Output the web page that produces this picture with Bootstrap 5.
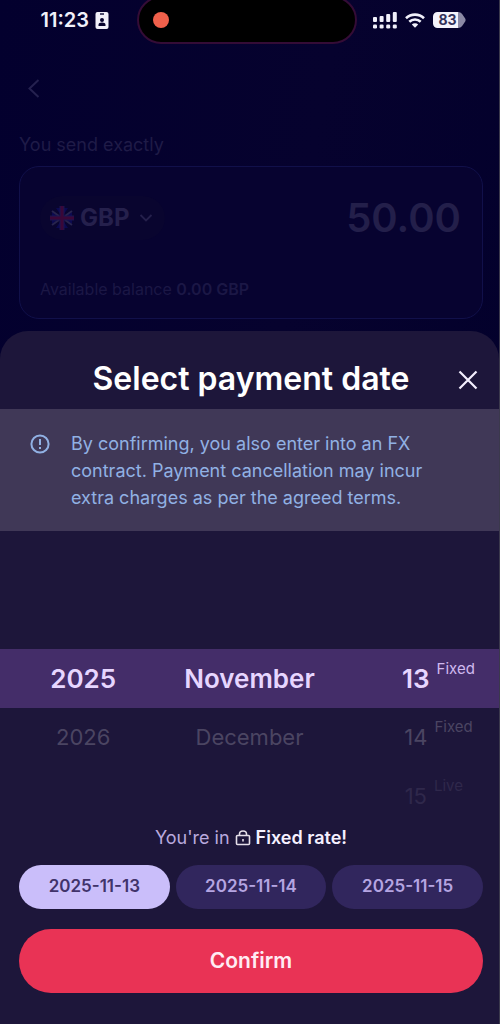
<!DOCTYPE html>
<html lang="en">
<head>
<meta charset="utf-8">
<meta name="viewport" content="width=device-width, initial-scale=1">
<title>Select payment date</title>
<link href="https://cdn.jsdelivr.net/npm/bootstrap@5.3.0/dist/css/bootstrap.min.css" rel="stylesheet">
<style>
  body { font-family: Inter, "Open Sans", sans-serif; background: #02002b; color: #fff; }
  .screen { background: linear-gradient(100deg, #03002e, #06022e 50%, #02002b); border-right: 1px solid #3b394c; }
  .screen button { font-family: inherit; }
  .status-bar { display: grid; grid-template-columns: 1fr 220px 1fr; height: 44px; padding-right: 5px; overflow: hidden; }
  .clock { font-size: 20px; line-height: 24px; color: #f1f0fa; }
  .status-time { padding-right: 28px; gap: 6px; }
  .island { height: 48px; margin-top: -4px; background: #000; border: 2px solid #340c36; border-radius: 24px; }
  .rec-dot { width: 16px; height: 16px; background: #f0604b; margin-left: 14px; }
  .plain-btn { background: none; border: 0; padding: 0; color: inherit; }
  .back-btn { color: #25214f; }
  .send-area { padding: 0 16px 12px 19px; }
  .send-label { font-size: 18px; line-height: 26px; color: #1f1b47; }
  .amount-card { border: 1px solid #11104a; border-radius: 20px; background: #070330; height: 153px; padding: 29px 21px 19px 20px; }
  .currency-btn { background: #09052f; border: 0; border-radius: 22px; height: 44px; padding: 0 12px 0 10px; color: #25204c; font-size: 24px; gap: 6px; }
  .amount-input { background: none; border: 0; padding: 0; color: #231f4a; font-size: 40px; line-height: 44px; min-width: 0; }
  .balance { font-size: 16px; line-height: 20px; color: #1b1745; }
  .sheet { background: #1d163a; border-radius: 28px 28px 0 0; }
  .sheet-head { display: grid; grid-template-columns: 32px 1fr 32px; height: 78px; padding: 28px 15px 0 18px; }
  .sheet-title { font-size: 32px; line-height: 40px; }
  .notice { background: #403857; color: #91b1e4; padding: 21px 50px 20px 30px; gap: 21px; }
  .notice p { font-size: 18px; line-height: 27px; }
  .picker { display: grid; grid-template-columns: repeat(3, 1fr); padding: 118px 0 0; height: 295px; }
  .opt { display: block; width: 100%; height: 59px; border: 0; background: none; padding: 0; font-size: 22px; color: #4b4562; }
  .opt.chosen { background: #442d69; color: #e7d6ff; font-size: 26px; font-weight: 600; }
  .opt.faint { color: #2f284b; }
  .rate-tag { position: absolute; left: 100%; bottom: 50%; margin-left: 7px; font-size: 15px; line-height: 20px; font-weight: 400; }
  .chosen .rate-tag { color: #d0b9ef; }
  .sheet-foot { padding: 0 16px 31px 19px; }
  .rate-line { font-size: 18px; line-height: 24px; color: #b9a9de; gap: 5px; margin-bottom: 15px; }
  .rate-line strong { color: #f5f0ff; font-weight: 600; }
  .chips { display: grid; grid-template-columns: repeat(3, 1fr); gap: 6px; margin-bottom: 20px; }
  .date-chip { height: 44px; border: 0; border-radius: 22px; background: #31265d; color: #b5a5e2; font-size: 17px; font-weight: 600; padding: 0; }
  .date-chip.chosen { background: #cabefa; color: #41336b; }
  .confirm-btn { height: 64px; border: 0; border-radius: 32px; background: #e93355; color: #ffecf4; font-size: 21px; font-weight: 600; }
</style>
</head>
<body>
<div class="screen min-vh-100 d-flex flex-column">
  <header class="status-bar">
    <div class="status-time d-flex align-items-center justify-content-end pb-1">
      <span class="clock fw-semibold">11:23</span>
      <svg width="14" height="17" viewBox="0 0 14 17" aria-hidden="true"><rect x=".5" width="13" height="17" rx="2" fill="#f1f0fa"/><path d="M5 2h4" stroke="#07032e" stroke-width="1.4"/><circle cx="7" cy="8" r="2" fill="#07032e"/><path d="M3.500 14v-1.200c0-1.600 1.400-2.300 3.500-2.300s3.500.7 3.500 2.300V14z" fill="#07032e"/></svg>
    </div>
    <div class="island d-flex align-items-center"><span class="rec-dot rounded-circle"></span></div>
    <div class="d-flex align-items-center gap-2 ps-3 pb-1">
      <svg width="24" height="17" viewBox="0 0 24 17" fill="#f1f0fa" aria-hidden="true"><rect y="5" width="4" height="5" rx="1"/><rect x="6.600" y="4" width="4" height="6" rx="1"/><rect x="13.200" y="2" width="4" height="8" rx="1"/><rect x="19.800" y="0" width="4" height="10" rx="1"/><rect y="12.500" width="4" height="4" rx="1.300"/><rect x="6.600" y="12.500" width="4" height="4" rx="1.300"/><rect x="13.200" y="12.500" width="4" height="4" rx="1.300"/><rect x="19.800" y="12.500" width="4" height="4" rx="1.300"/></svg>
      <svg width="20" height="15" viewBox="0 0 20 15" fill="none" stroke="#f1f0fa" stroke-width="2.600" aria-hidden="true"><path d="M1 5.200a13 13 0 0 1 18 0M4.300 8.800a8.300 8.300 0 0 1 11.400 0"/><path d="M10 14.800 6.800 11.500a4.600 4.600 0 0 1 6.400 0z" fill="#f1f0fa" stroke="none"/></svg>
      <svg width="33" height="16" viewBox="0 0 33 16" role="img" aria-label="Battery 83"><path d="M5 0h20.500a5 5 0 0 1 4 2.500L32.500 7v2l-3 4.500a5 5 0 0 1-4 2.500H5z" fill="#8b89a5"/><path d="M4.500 0H25v16H4.500A4.500 4.500 0 0 1 0 11.500v-7A4.500 4.500 0 0 1 4.500 0z" fill="#f4f3fb"/><text x="14.500" y="13" text-anchor="middle" font-size="14" font-weight="700" fill="#35325a">83</text></svg>
    </div>
  </header>

  <main class="flex-grow-1 d-flex flex-column">
    <section class="send-area">
      <button class="plain-btn back-btn d-block mt-4 px-1" aria-label="Back"><svg width="20" height="40" viewBox="0 0 20 40" fill="none" stroke="currentColor" stroke-width="2"><path d="m15.500 12-9 8.500 9 8.500"/></svg></button>
      <div class="send-label mt-4"><label for="amount">You send exactly</label></div>
      <div class="amount-card mt-2 d-flex flex-column justify-content-between">
        <div class="d-flex align-items-center justify-content-between">
          <button class="currency-btn d-flex align-items-center fw-bold flex-shrink-0">
            <svg width="24" height="24" viewBox="0 0 24 24" aria-hidden="true"><path d="M2 6v4h6zM6 2l4 6V2zM22 6v4h-6zM18 2l-4 6V2zM2 18v-4h6zM6 22l4-6v6zM22 18v-4h-6zM18 22l-4-6v6z" fill="#0b0950"/><path d="m2 5 7 5M22 5l-7 5M2 19l7-5M22 19l-7-5" stroke="#28244e" stroke-width="2"/><path d="M12 0v24M0 12h24" stroke="#1b1650" stroke-width="5"/><path d="M12 0v24M0 12h24" stroke="#3a0738" stroke-width="3"/></svg>
            <span>GBP</span>
            <svg class="ms-1" width="14" height="10" viewBox="0 0 14 10" fill="none" stroke="currentColor" stroke-width="1.800"><path d="m1.500 2 5.500 5.500L12.500 2"/></svg>
          </button>
          <input id="amount" class="amount-input text-end fw-semibold flex-grow-1" type="text" value="50.00">
        </div>
        <div class="balance">Available balance <b class="fw-semibold">0.00 GBP</b></div>
      </div>
    </section>

    <section class="sheet flex-grow-1" role="dialog" aria-labelledby="sheet-title">
      <div class="sheet-head align-items-start">
        <span></span>
        <h1 id="sheet-title" class="sheet-title fw-semibold text-center text-nowrap m-0">Select payment date</h1>
        <button class="plain-btn pt-2" aria-label="Close"><svg class="d-block mx-auto" width="20" height="24" viewBox="0 0 20 24" fill="none" stroke="#f4f0ff" stroke-width="2.200"><path d="m1.500 4.500 17 17M18.500 4.500l-17 17"/></svg></button>
      </div>
      <div class="notice d-flex align-items-start">
        <svg class="flex-shrink-0 mt-1" width="20" height="20" viewBox="0 0 20 20" fill="none" stroke="currentColor" stroke-width="2"><circle cx="10" cy="10" r="8.600"/><path d="M10 5v6M10 13v2"/></svg>
        <p class="m-0">By confirming, you also enter into an FX contract. Payment cancellation may incur extra charges as per the agreed terms.</p>
      </div>
      <div class="picker">
        <div><button class="opt chosen">2025</button><button class="opt">2026</button></div>
        <div><button class="opt chosen">November</button><button class="opt">December</button></div>
        <div>
          <button class="opt chosen"><span class="position-relative">13<span class="rate-tag">Fixed</span></span></button>
          <button class="opt"><span class="position-relative">14<span class="rate-tag">Fixed</span></span></button>
          <button class="opt faint"><span class="position-relative">15<span class="rate-tag">Live</span></span></button>
        </div>
      </div>
      <div class="sheet-foot">
        <div class="rate-line d-flex align-items-center justify-content-center">
          <span>You're in</span>
          <svg width="16" height="16" viewBox="0 0 16 16" fill="none" stroke="#e5dfe9" stroke-width="1.600" aria-hidden="true"><rect x="1.500" y="5.500" width="13" height="9" rx="1"/><path d="M4.500 5.500V4a3.500 3 0 0 1 7 0v1.500M8 9v2.500"/></svg>
          <strong>Fixed rate!</strong>
        </div>
        <div class="chips">
          <button class="date-chip chosen">2025-11-13</button>
          <button class="date-chip">2025-11-14</button>
          <button class="date-chip">2025-11-15</button>
        </div>
        <button class="confirm-btn w-100">Confirm</button>
      </div>
    </section>
  </main>
</div>
<script src="https://cdn.jsdelivr.net/npm/bootstrap@5.3.0/dist/js/bootstrap.bundle.min.js"></script>
</body>
</html>
